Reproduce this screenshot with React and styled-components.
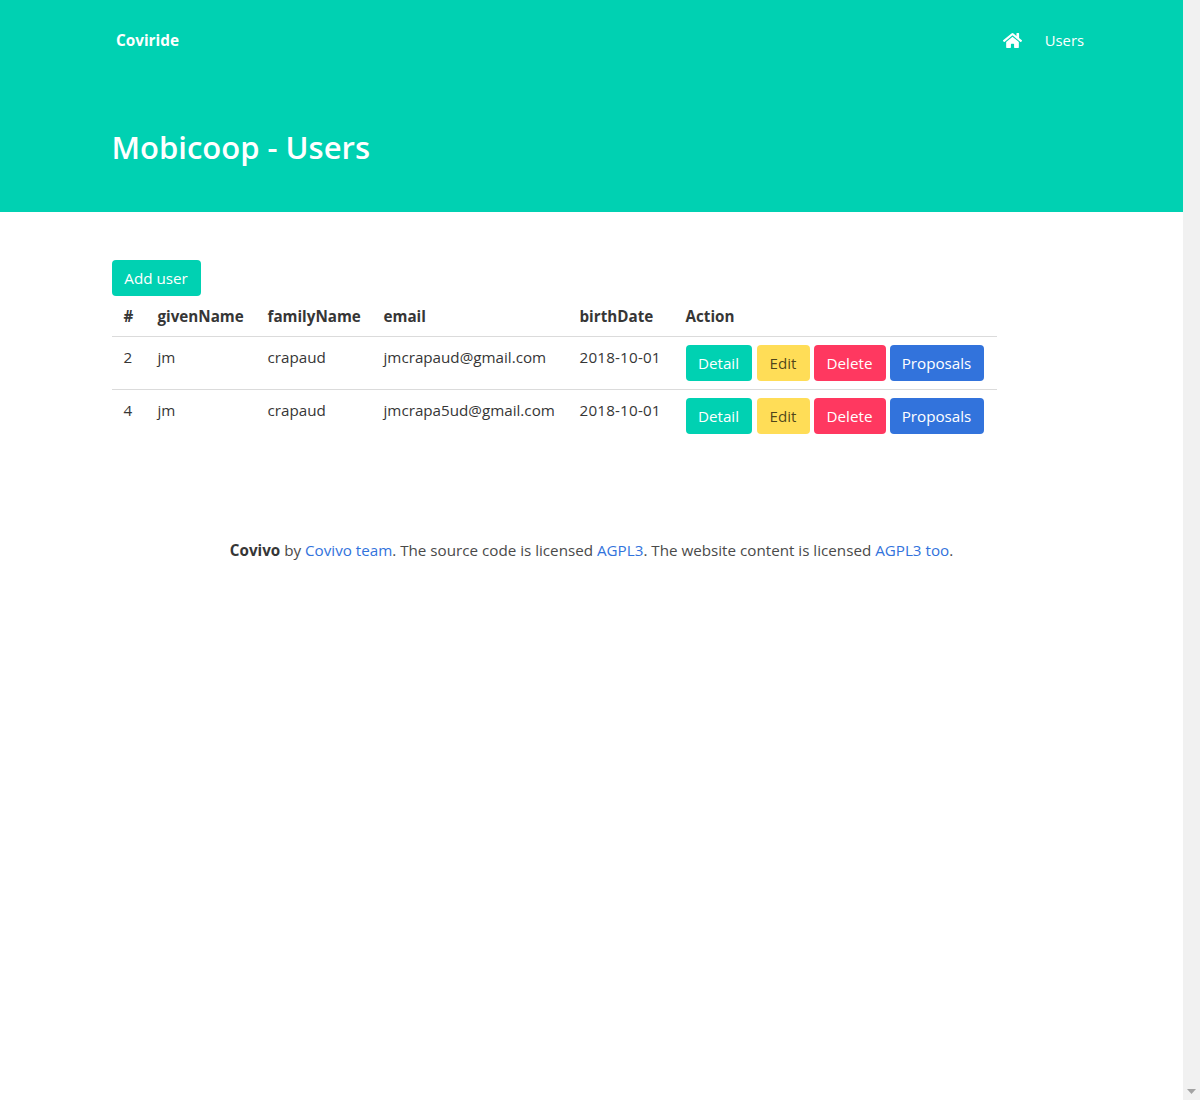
import React from "react";
import styled, { createGlobalStyle } from "styled-components";
import { FaHome } from "react-icons/fa";

const Global = createGlobalStyle`
  html, body { margin: 0; height: 100%; overflow: hidden; background: #fff; }
  body { font-family: "Open Sans", "Noto Sans", sans-serif; font-size: 15.2px; line-height: 24px; color: #4a4a4a; }
`;
const Shell = styled.div`
  display: flex; height: 1100px;
`;
const Page = styled.div`
  width: 1183px; flex: none;
`;
const Scrollbar = styled.aside`
  flex: 1; background: #f1f1f1; display: flex; align-items: flex-end; justify-content: center; padding-bottom: 6px;
`;
const Hero = styled.section`
  background: #00d1b2; height: 212px; color: #fff; display: flex; flex-direction: column;
`;
const Container = styled.div`
  width: 960px; margin: 0 auto;
`;
const Nav = styled.nav`
  height: 80px; display: flex; align-items: center; justify-content: space-between;
  padding: 0 99px 0 116px;
`;
const Brand = styled.a`
  font-weight: 700; font-size: 15.3px; color: #fff;
`;
const Menu = styled.div`
  display: flex; align-items: center; gap: 23px;
`;
const NavLink = styled.a`
  color: #fff; font-size: 14.8px; display: flex; align-items: center;
`;
const HeroBody = styled(Container)`
  padding-top: 47px;
`;
const Title = styled.h1`
  margin: 0; font-size: 31px; font-weight: 600; line-height: 40px; color: #fff;
`;
const Main = styled(Container)`
  padding-top: 48px;
`;
const Button = styled.a`
  display: inline-flex; align-items: center; justify-content: center; box-sizing: border-box;
  height: 36px; width: ${p => p.$w}px; margin-right: ${p => p.$gap || 0}px; border-radius: 4px;
  background: ${p => p.$bg}; color: ${p => p.$fg || "#fff"}; font-size: 15.2px; white-space: nowrap;
`;
const Table = styled.table`
  border-collapse: collapse; table-layout: fixed; width: 885px; color: #363636;
`;
const Th = styled.th`
  text-align: left; font-weight: 700; padding: 8px 12px; border-bottom: 1px solid #dbdbdb; height: 24px; width: ${p => p.$w}px; box-sizing: content-box; white-space: nowrap;
`;
const Td = styled.td`
  padding: 8px 12px; vertical-align: top; border-bottom: 1px solid ${p => p.$last ? "transparent" : "#dbdbdb"}; white-space: nowrap;
`;
const DateText = styled.span`
  letter-spacing: 0.2px;
`;
const Actions = styled.div`
  display: flex;
`;
const Footer = styled.footer`
  margin-top: 95px; text-align: center; color: #4a4a4a;
  strong { color: #363636; font-weight: 700; }
`;
const Link = styled.a`
  color: #3273dc;
`;

const rows = [
  { id: 2, email: "jmcrapaud@gmail.com" },
  { id: 4, email: "jmcrapa5ud@gmail.com" },
];

export default function App() {
  return (
    <Shell>
      <Global />
      <Page>
        <Hero>
          <Nav>
            <Brand>Coviride</Brand>
            <Menu>
              <NavLink><FaHome size={19} /></NavLink>
              <NavLink>Users</NavLink>
            </Menu>
          </Nav>
          <HeroBody><Title>Mobicoop - Users</Title></HeroBody>
        </Hero>
        <Main>
          <Button $w={89} $bg="#00d1b2">Add user</Button>
          <Table>
            <thead>
              <tr>
                <Th $w={10}>#</Th>
                <Th $w={86}>givenName</Th>
                <Th $w={92}>familyName</Th>
                <Th $w={172}>email</Th>
                <Th $w={82}>birthDate</Th>
                <Th>Action</Th>
              </tr>
            </thead>
            <tbody>
              {rows.map((r, i) => (
                <tr key={r.id}>
                  <Td $last={i === 1}>{r.id}</Td>
                  <Td $last={i === 1}>jm</Td>
                  <Td $last={i === 1}>crapaud</Td>
                  <Td $last={i === 1}>{r.email}</Td>
                  <Td $last={i === 1}><DateText>2018-10-01</DateText></Td>
                  <Td $last={i === 1}>
                    <Actions>
                      <Button $w={66} $gap={5} $bg="#00d1b2">Detail</Button>
                      <Button $w={53} $gap={4} $bg="#ffdd57" $fg="rgba(0,0,0,.7)">Edit</Button>
                      <Button $w={72} $gap={4} $bg="#ff3860">Delete</Button>
                      <Button $w={94} $bg="#3273dc">Proposals</Button>
                    </Actions>
                  </Td>
                </tr>
              ))}
            </tbody>
          </Table>
          <Footer>
            <strong>Covivo</strong> by <Link>Covivo team</Link>. The source code is licensed <Link>AGPL3</Link>. The website content is licensed <Link>AGPL3 too</Link>.
          </Footer>
        </Main>
      </Page>
      <Scrollbar>
        <svg width="9" height="5" viewBox="0 0 9 5"><path d="M0 0h9L4.5 5z" fill="#a3a3a3" /></svg>
      </Scrollbar>
    </Shell>
  );
}
